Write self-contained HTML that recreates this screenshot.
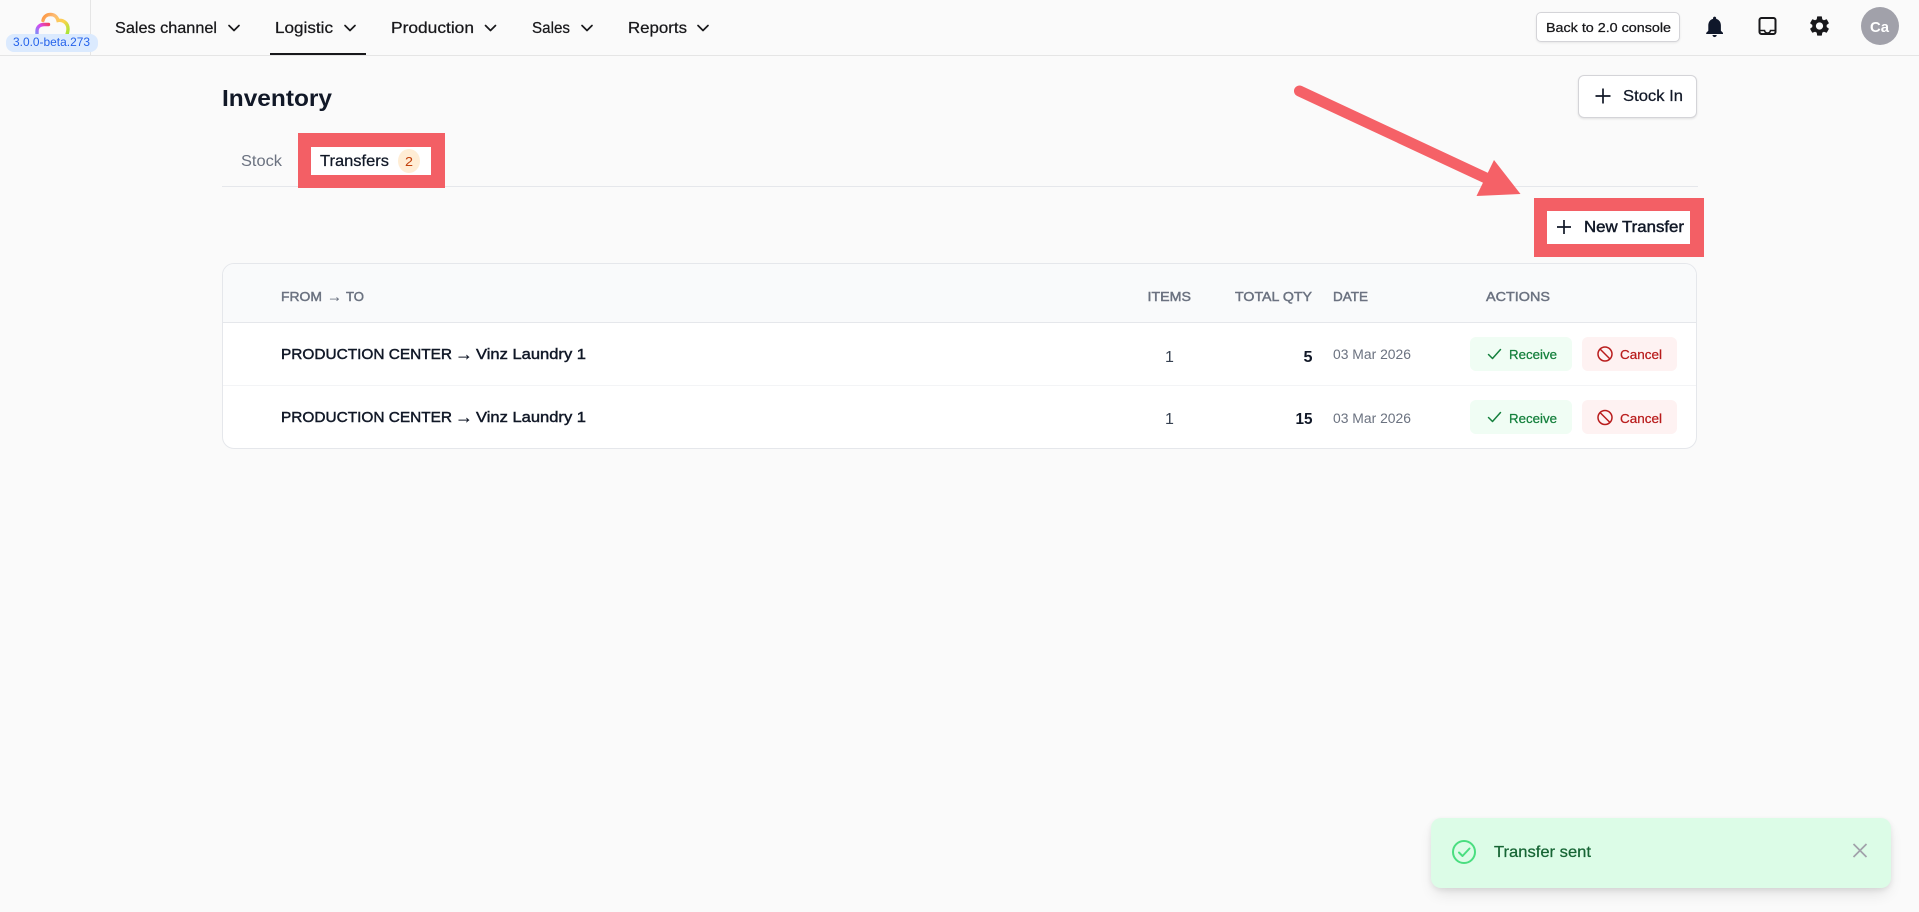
<!DOCTYPE html>
<html lang="en">
<head>
<meta charset="utf-8">
<title>Inventory</title>
<style>
*{box-sizing:border-box}
html,body{margin:0;padding:0;width:1919px;height:912px;overflow:hidden;background:#fafafa}
.b{position:absolute}
svg.o{position:absolute;left:0;top:0}
text{font-family:"Liberation Sans",sans-serif;white-space:pre}
.m{stroke:currentColor;stroke-width:.25}
.s{stroke:currentColor;stroke-width:.45}
</style>
</head>
<body>
<div class="b" style="left:0;top:0;width:1919px;height:56px;border-bottom:1px solid #e5e5e5"></div>
<div class="b" style="left:90px;top:0;width:1px;height:55px;background:#e5e5e5"></div>
<div class="b" style="left:270px;top:53px;width:96px;height:2px;background:#18181b"></div>
<div class="b" style="left:1536px;top:12px;width:144px;height:30px;border-radius:5px;background:#fff;border:1px solid #d4d4d8;box-shadow:0 1px 2px rgba(0,0,0,.08)"></div>
<div class="b" style="left:1861px;top:7px;width:38px;height:38px;border-radius:50%;background:#a1a1aa"></div>
<div class="b" style="left:1578px;top:75px;width:119px;height:43px;border-radius:6px;background:#fff;border:1px solid #d4d4d8;box-shadow:0 1px 2px rgba(0,0,0,.1)"></div>
<div class="b" style="left:222px;top:186px;width:1476px;height:1px;background:#e5e7eb"></div>
<div class="b" style="left:298px;top:133px;width:147px;height:55px;background:#f35f65"></div>
<div class="b" style="left:311px;top:147px;width:120px;height:28px;background:#fff"></div>
<div class="b" style="left:398px;top:149px;width:22px;height:24px;border-radius:50%;background:#ffedd5"></div>
<div class="b" style="left:1534px;top:198px;width:170px;height:59px;background:#f35f65"></div>
<div class="b" style="left:1547px;top:211px;width:143px;height:33px;background:#fff"></div>
<div class="b" style="left:222px;top:263px;width:1475px;height:186px;border-radius:12px;background:#fff;border:1px solid #e5e7eb;overflow:hidden">
  <div style="height:59px;background:#f9fafb;border-bottom:1px solid #e5e7eb"></div>
  <div style="height:63px;border-bottom:1px solid #f3f4f6"></div>
</div>
<div class="b" style="left:1470px;top:337px;width:102px;height:34px;border-radius:6px;background:#f0fdf4"></div>
<div class="b" style="left:1582px;top:337px;width:95px;height:34px;border-radius:6px;background:#fef2f2"></div>
<div class="b" style="left:1470px;top:400px;width:102px;height:34px;border-radius:6px;background:#f0fdf4"></div>
<div class="b" style="left:1582px;top:400px;width:95px;height:34px;border-radius:6px;background:#fef2f2"></div>
<div class="b" style="left:1431px;top:818px;width:460px;height:70px;border-radius:10px;background:#dcfce7;box-shadow:0 8px 16px -4px rgba(0,0,0,.12),0 2px 6px rgba(0,0,0,.08)"></div>

<svg class="o" width="1919" height="912" viewBox="0 0 1919 912" xmlns="http://www.w3.org/2000/svg">
<defs>
<linearGradient id="cg" gradientUnits="userSpaceOnUse" x1="43" y1="14" x2="68" y2="34"><stop offset="0" stop-color="#fb923c"/><stop offset=".3" stop-color="#fdba74"/><stop offset=".65" stop-color="#fcd34d"/><stop offset="1" stop-color="#a3e635"/></linearGradient>
<linearGradient id="cp" gradientUnits="userSpaceOnUse" x1="49" y1="24" x2="37" y2="34"><stop offset="0" stop-color="#f43f5e"/><stop offset=".5" stop-color="#d946ef"/><stop offset="1" stop-color="#818cf8"/></linearGradient>
</defs>
<path d="M43 20.500 C44 16 47.500 14.500 50.500 14.500 C54 14.500 57 16.500 58 20.500 C63 19.500 68 23 68 29 C68 31 67.500 33 66.500 36" fill="none" stroke="url(#cg)" stroke-width="3.400" stroke-linecap="round"/>
<path d="M48.500 24.500 L44 24.500 C40 24.500 37 27 37 31 L37 36" fill="none" stroke="url(#cp)" stroke-width="3.400" stroke-linecap="round"/>
<rect x="6" y="34" width="92" height="18" rx="8" fill="#dbeafe"/>
<text x="13" y="46" font-size="12" fill="#2563eb" textLength="77" lengthAdjust="spacingAndGlyphs">3.0.0-beta.273</text>

<g font-size="16" fill="#18181b" color="#18181b" class="m">
<text x="115" y="33" textLength="102" lengthAdjust="spacingAndGlyphs">Sales channel</text>
<text x="275" y="33" textLength="58" lengthAdjust="spacingAndGlyphs">Logistic</text>
<text x="391" y="33" textLength="83" lengthAdjust="spacingAndGlyphs">Production</text>
<text x="532" y="33" textLength="38" lengthAdjust="spacingAndGlyphs">Sales</text>
<text x="628" y="33" textLength="59" lengthAdjust="spacingAndGlyphs">Reports</text>
</g>
<g fill="none" stroke="#18181b" stroke-width="1.700" stroke-linecap="round" stroke-linejoin="round">
<path d="M229 25.500l5 5 5-5"/><path d="M345 25.500l5 5 5-5"/><path d="M485.500 25.500l5 5 5-5"/><path d="M582 25.500l5 5 5-5"/><path d="M698 25.500l5 5 5-5"/>
</g>

<text x="1546" y="32" font-size="13" fill="#18181b" color="#18181b" class="m" textLength="125" lengthAdjust="spacingAndGlyphs">Back to 2.0 console</text>
<path transform="translate(1702 14) scale(1.050)" fill="#0f172a" d="M12 22c1.100 0 2-.9 2-2h-4c0 1.100.89 2 2 2zm6-6v-5c0-3.070-1.640-5.640-4.500-6.320V4c0-.83-.67-1.500-1.500-1.500s-1.500.67-1.500 1.500v.68C7.630 5.360 6 7.920 6 11v5l-2 2v1h16v-1l-2-2z"/>
<rect x="1759.500" y="18" width="16" height="16" rx="2" fill="none" stroke="#18181b" stroke-width="2"/>
<path d="M1760 30.500h4.500c.3 1.500 1 2.500 3 2.500s2.700-1 3-2.500h4.500" fill="none" stroke="#18181b" stroke-width="1.600"/>
<path transform="translate(1807.500 14)" fill="#18181b" d="M19.140 12.940c.04-.3.06-.61.06-.94 0-.32-.02-.64-.07-.94l2.030-1.580c.18-.14.23-.41.12-.61l-1.920-3.320c-.12-.22-.37-.29-.59-.22l-2.390.96c-.5-.38-1.030-.7-1.620-.94l-.36-2.540c-.04-.24-.24-.41-.48-.41h-3.840c-.24 0-.43.17-.47.41l-.36 2.540c-.59.24-1.130.57-1.620.94l-2.390-.96c-.22-.08-.47 0-.59.22L2.740 8.870c-.12.21-.08.47.12.61l2.030 1.580c-.05.3-.09.63-.09.94s.02.64.07.94l-2.030 1.580c-.18.14-.23.41-.12.61l1.920 3.320c.12.22.37.29.59.22l2.390-.96c.5.38 1.030.7 1.620.94l.36 2.540c.05.24.24.41.48.41h3.840c.24 0 .44-.17.47-.41l.36-2.540c.59-.24 1.130-.56 1.620-.94l2.390.96c.22.08.47 0 .59-.22l1.920-3.320c.12-.22.07-.47-.12-.61l-2.010-1.580zM12 15.600c-1.980 0-3.600-1.620-3.600-3.600s1.620-3.600 3.600-3.600 3.600 1.620 3.600 3.600-1.620 3.600-3.600 3.600z"/>
<text x="1870" y="32" font-size="15" font-weight="700" fill="#fff" textLength="19" lengthAdjust="spacingAndGlyphs">Ca</text>

<text x="222" y="106" font-size="23" font-weight="700" fill="#111827" textLength="110" lengthAdjust="spacingAndGlyphs">Inventory</text>
<text x="241" y="166" font-size="16" fill="#6b7280" textLength="41" lengthAdjust="spacingAndGlyphs">Stock</text>
<text x="320" y="166" font-size="16" fill="#111827" color="#111827" class="m" textLength="69" lengthAdjust="spacingAndGlyphs">Transfers</text>
<text x="405" y="166" font-size="13" fill="#c2410c" textLength="8" lengthAdjust="spacingAndGlyphs">2</text>

<path d="M1603 88.500v15M1595.500 96h15" stroke="#111827" stroke-width="1.700" fill="none"/>
<text x="1623" y="101" font-size="16" fill="#111827" color="#111827" class="m" textLength="60" lengthAdjust="spacingAndGlyphs">Stock In</text>

<path d="M1299.500 91 L1487 178.500" stroke="#f56167" stroke-width="11" stroke-linecap="round" fill="none"/>
<polygon points="1520.500,194 1494,160 1476.500,196" fill="#f56167"/>

<path d="M1564 220v14M1557 227h14" stroke="#111827" stroke-width="1.700" fill="none"/>
<text x="1584" y="232" font-size="16" fill="#111827" color="#111827" class="s" textLength="100" lengthAdjust="spacingAndGlyphs">New Transfer</text>

<g font-size="13" fill="#6b7280" color="#6b7280" class="s">
<text x="281" y="301" textLength="41" lengthAdjust="spacingAndGlyphs">FROM</text>
<text x="327" y="301.500" font-size="15" style="stroke-width:.2">→</text>
<text x="346" y="301" textLength="18" lengthAdjust="spacingAndGlyphs">TO</text>
<text x="1147.500" y="301" textLength="43.500" lengthAdjust="spacingAndGlyphs">ITEMS</text>
<text x="1235" y="301" textLength="77" lengthAdjust="spacingAndGlyphs">TOTAL QTY</text>
<text x="1333" y="301" textLength="35" lengthAdjust="spacingAndGlyphs">DATE</text>
<text x="1486" y="301" textLength="64" lengthAdjust="spacingAndGlyphs">ACTIONS</text>
</g>

<g font-size="15" fill="#111827" color="#111827" class="s">
<text x="281" y="359" textLength="171" lengthAdjust="spacingAndGlyphs">PRODUCTION CENTER</text>
<text x="455" y="360" font-size="18" style="stroke-width:.2">→</text>
<text x="476" y="359" textLength="110" lengthAdjust="spacingAndGlyphs">Vinz Laundry 1</text>
<text x="281" y="422" textLength="171" lengthAdjust="spacingAndGlyphs">PRODUCTION CENTER</text>
<text x="455" y="423" font-size="18" style="stroke-width:.2">→</text>
<text x="476" y="422" textLength="110" lengthAdjust="spacingAndGlyphs">Vinz Laundry 1</text>
</g>
<g font-size="16" fill="#374151">
<text x="1165" y="362">1</text>
<text x="1165" y="424">1</text>
</g>
<g font-size="16" font-weight="700" fill="#111827">
<text x="1303.500" y="362" textLength="9" lengthAdjust="spacingAndGlyphs">5</text>
<text x="1295.500" y="424" textLength="17" lengthAdjust="spacingAndGlyphs">15</text>
</g>
<g font-size="13.500" fill="#6b7280">
<text x="1333" y="359" textLength="78" lengthAdjust="spacingAndGlyphs">03 Mar 2026</text>
<text x="1333" y="423" textLength="78" lengthAdjust="spacingAndGlyphs">03 Mar 2026</text>
</g>

<g>
<path d="M1488.500 354.500l4 4 8-9" fill="none" stroke="#15803d" stroke-width="1.500" stroke-linecap="round" stroke-linejoin="round"/>
<text x="1509" y="359" font-size="13" fill="#15803d" color="#15803d" class="m" textLength="48" lengthAdjust="spacingAndGlyphs">Receive</text>
<circle cx="1605" cy="354" r="7" fill="none" stroke="#b91c1c" stroke-width="1.500"/>
<path d="M1600 349l10 10" stroke="#b91c1c" stroke-width="1.500"/>
<text x="1620" y="359" font-size="13" fill="#b91c1c" color="#b91c1c" class="m" textLength="42" lengthAdjust="spacingAndGlyphs">Cancel</text>
</g>
<g>
<path d="M1488.500 417.500l4 4 8-9" fill="none" stroke="#15803d" stroke-width="1.500" stroke-linecap="round" stroke-linejoin="round"/>
<text x="1509" y="423" font-size="13" fill="#15803d" color="#15803d" class="m" textLength="48" lengthAdjust="spacingAndGlyphs">Receive</text>
<circle cx="1605" cy="417.500" r="7" fill="none" stroke="#b91c1c" stroke-width="1.500"/>
<path d="M1600 412.500l10 10" stroke="#b91c1c" stroke-width="1.500"/>
<text x="1620" y="423" font-size="13" fill="#b91c1c" color="#b91c1c" class="m" textLength="42" lengthAdjust="spacingAndGlyphs">Cancel</text>
</g>

<circle cx="1464" cy="852" r="11" fill="none" stroke="#4ade80" stroke-width="2"/>
<path d="M1459 852.500l3.500 3.500 7-7.500" fill="none" stroke="#4ade80" stroke-width="2" stroke-linecap="round" stroke-linejoin="round"/>
<text x="1494" y="857" font-size="16" fill="#166534" color="#166534" class="m" textLength="97" lengthAdjust="spacingAndGlyphs">Transfer sent</text>
<path d="M1853.500 844l13 13M1866.500 844l-13 13" stroke="#a1a1aa" stroke-width="1.700" fill="none"/>
</svg>
</body>
</html>
